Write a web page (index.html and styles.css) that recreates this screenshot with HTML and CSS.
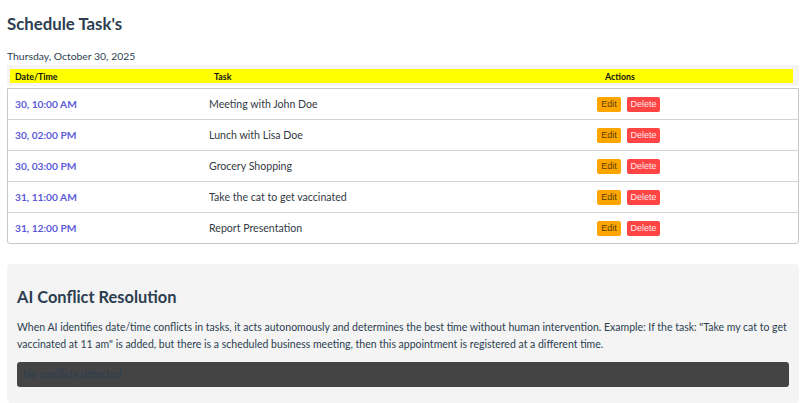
FILE: index.html
```html
<!DOCTYPE html>
<html>
<head>
<meta charset="utf-8">
<link rel="stylesheet" href="styles.css">
</head>
<body>
<div class="page">
  <h1 class="title">Schedule Task's</h1>
  <div class="date">Thursday, October 30, 2025</div>
  <div class="thead">
    <div class="hrow">
      <div>Date/Time</div>
      <div class="h-task">Task</div>
      <div class="h-actions">Actions</div>
    </div>
  </div>
  <div class="tbody">
    <div class="row"><div class="dt">30, 10:00 AM</div><div class="task">Meeting with John Doe</div><div class="actions"><button class="btn edit">Edit</button><button class="btn del">Delete</button></div></div>
    <div class="row"><div class="dt">30, 02:00 PM</div><div class="task">Lunch with Lisa Doe</div><div class="actions"><button class="btn edit">Edit</button><button class="btn del">Delete</button></div></div>
    <div class="row"><div class="dt">30, 03:00 PM</div><div class="task">Grocery Shopping</div><div class="actions"><button class="btn edit">Edit</button><button class="btn del">Delete</button></div></div>
    <div class="row"><div class="dt">31, 11:00 AM</div><div class="task">Take the cat to get vaccinated</div><div class="actions"><button class="btn edit">Edit</button><button class="btn del">Delete</button></div></div>
    <div class="row last"><div class="dt">31, 12:00 PM</div><div class="task">Report Presentation</div><div class="actions"><button class="btn edit">Edit</button><button class="btn del">Delete</button></div></div>
  </div>
  <div class="ai">
    <h2 class="ai-title">AI Conflict Resolution</h2>
    <p class="ai-text">When AI identifies date/time conflicts in tasks, it acts autonomously and determines the best time without human intervention. Example: If the task: "Take my cat to get vaccinated at 11 am" is added, but there is a scheduled business meeting, then this appointment is registered at a different time.</p>
    <div class="status">No conflicts detected</div>
  </div>
</div>
</body>
</html>
```
FILE: styles.css
```css
html, body {
  margin: 0;
  padding: 0;
  background: #ffffff;
}
body {
  font-family: Lato, "Noto Sans", sans-serif;
  color: #2c3e50;
}
.page {
  padding: 0 7px;
}
.title {
  margin: 0;
  padding-top: 13px;
  font-size: 16.8px;
  line-height: 22px;
  font-weight: 700;
  color: #2c3e50;
}
.date {
  margin-top: 13px;
  font-size: 10.4px;
  line-height: 16px;
  color: #2c3e50;
}
.thead {
  margin-top: 1px;
  background: #f4f4f4;
  padding: 4px 6px 3px 3px;
}
.hrow {
  display: grid;
  grid-template-columns: 197px 388px 1fr;
  background: #ffff00;
  height: 14px;
  align-items: center;
  padding-left: 5px;
  font-size: 8.8px;
  font-weight: 700;
  color: #111;
}
.h-task { padding-left: 2px; }
.h-actions { padding-left: 5px; }
.tbody {
  margin-top: 2px;
  border: 1px solid #c8c8c8;
  border-radius: 0 0 3px 3px;
}
.row {
  display: grid;
  grid-template-columns: 194px 388px 1fr;
  height: 30px;
  align-items: center;
  padding-left: 7px;
  border-bottom: 1px solid #d4d4d4;
}
.row.last { border-bottom: none; }
.dt {
  font-weight: 700;
  font-size: 10.2px;
  color: #5b5bd9;
}
.task {
  font-size: 10.6px;
  color: #333a44;
}
.actions {
  display: flex;
  gap: 6px;
}
.btn {
  font-family: "Liberation Sans", Arial, sans-serif;
  font-size: 9px;
  line-height: 11px;
  height: 15px;
  border: none;
  border-radius: 2px;
  margin: 0;
  padding: 0;
}
.edit {
  background: #ffa500;
  color: #5a3f00;
  width: 24px;
}
.del {
  background: #ff4444;
  color: #ffe8e8;
  width: 33px;
}
.ai {
  margin-top: 20px;
  background: #f4f4f4;
  border-radius: 4px;
  padding: 22px 10px 16px 10px;
}
.ai-title {
  margin: 0;
  font-size: 16.4px;
  line-height: 22px;
  font-weight: 700;
  color: #2c3e50;
}
.ai-text {
  margin: 11px 0 0 0;
  font-size: 10.5px;
  line-height: 17px;
  color: #2c3e50;
}
.status {
  margin-top: 9px;
  background: #444444;
  border-radius: 3px;
  height: 25px;
  line-height: 25px;
  padding-left: 6px;
  font-size: 10.5px;
  color: #2c3e50;
}
```
